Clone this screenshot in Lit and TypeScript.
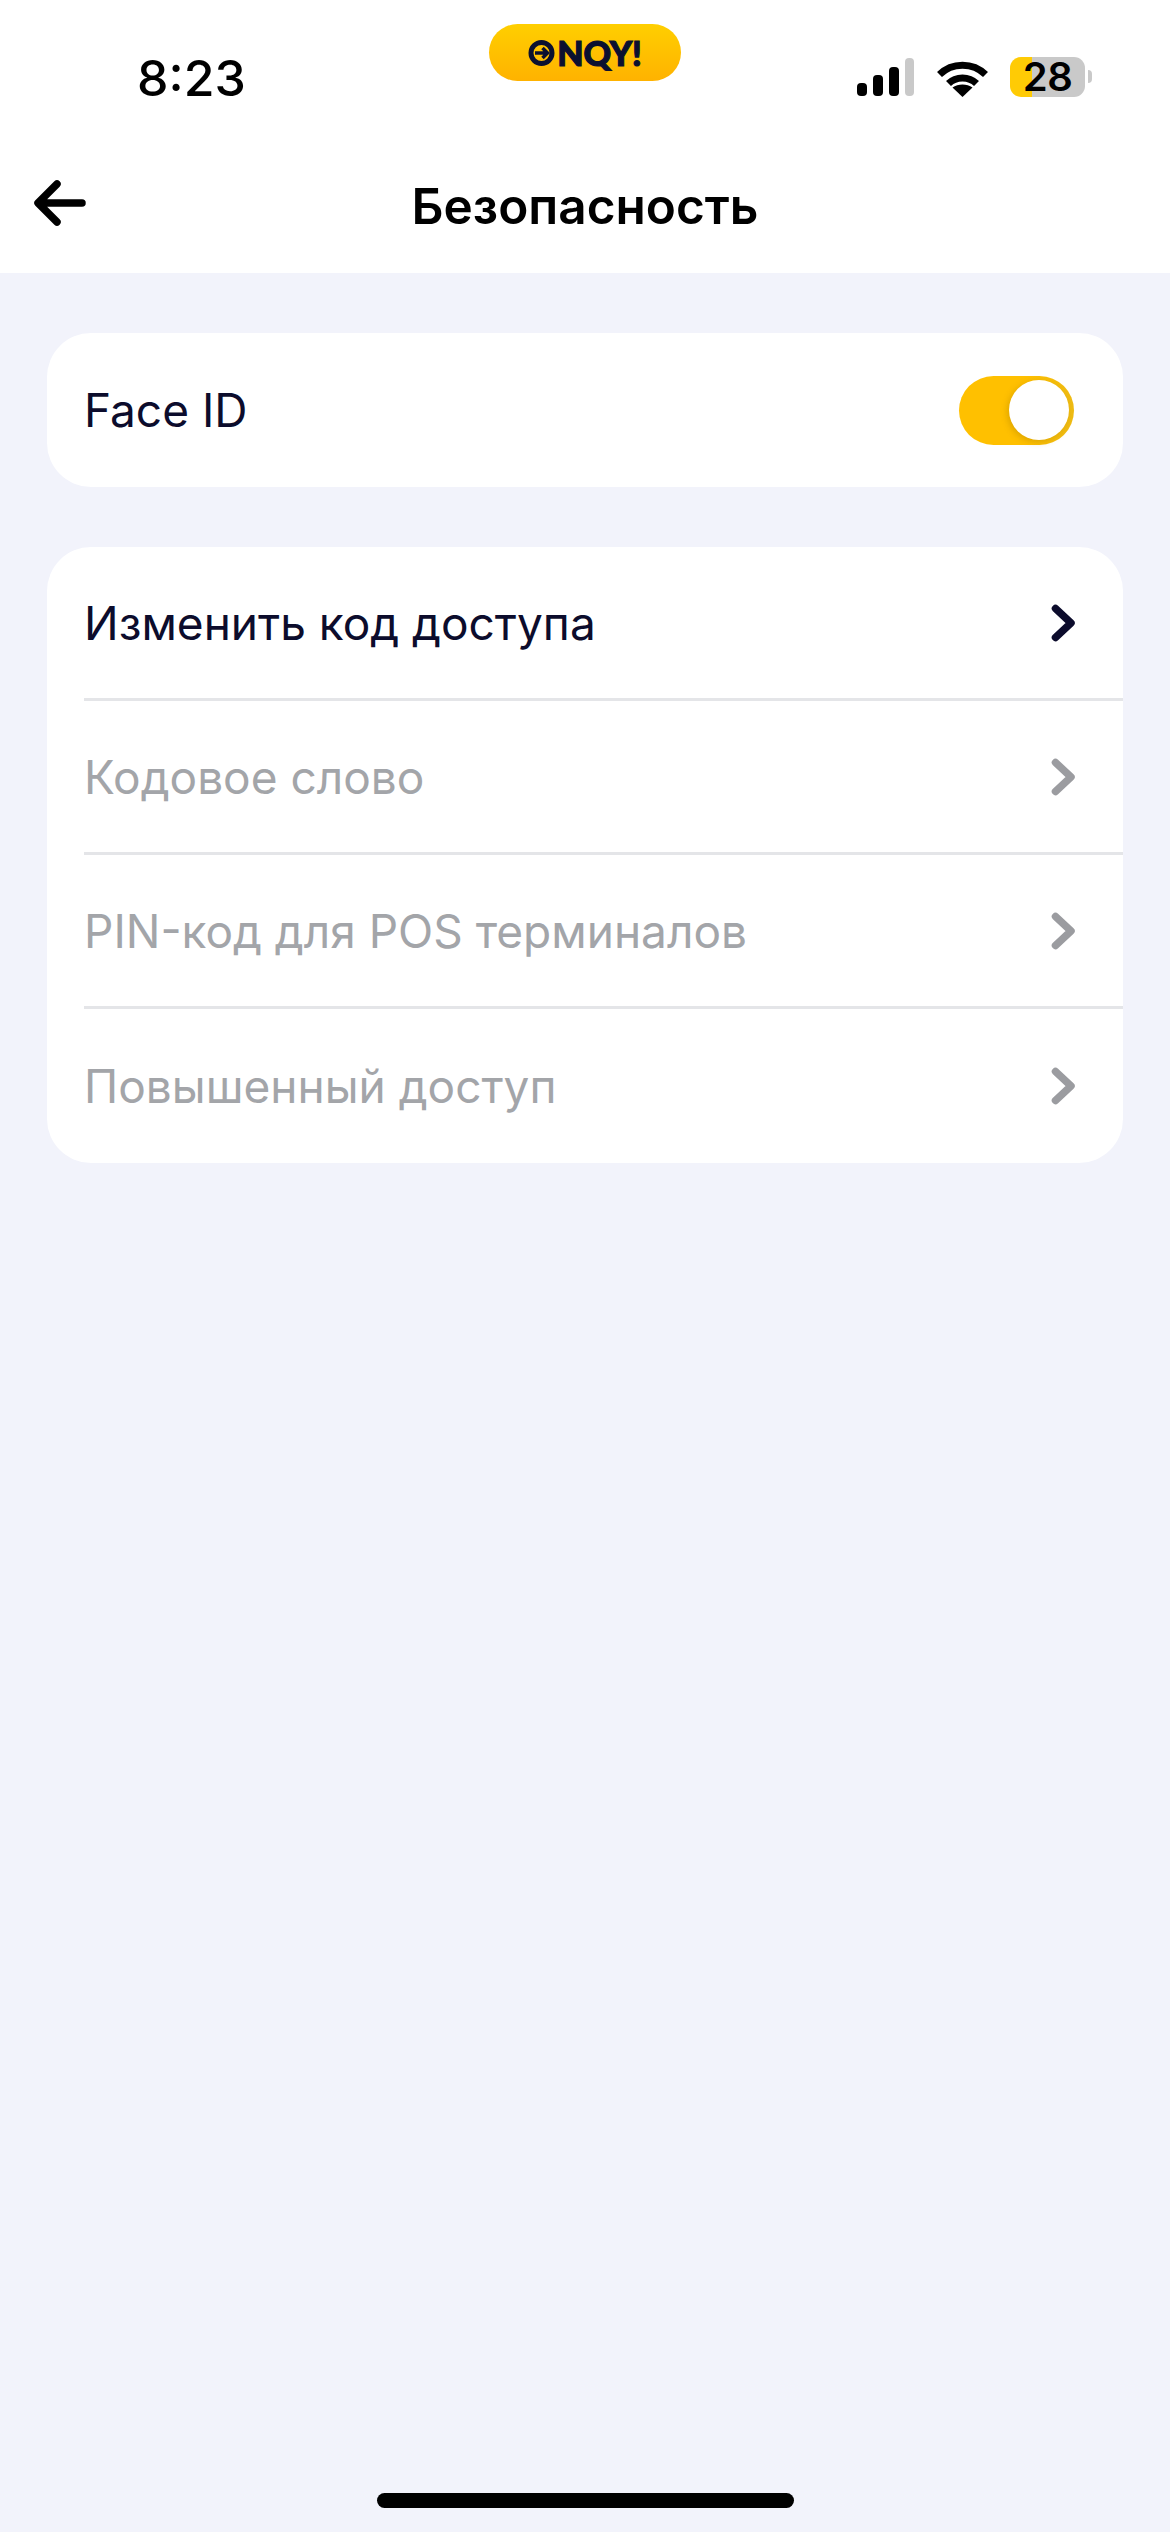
import { LitElement, css, html, svg } from 'lit'
import { customElement } from 'lit/decorators.js'

interface Row {
  label: string
  disabled: boolean
}

const ROWS: Row[] = [
  { label: 'Изменить код доступа', disabled: false },
  { label: 'Кодовое слово', disabled: true },
  { label: 'PIN-код для POS терминалов', disabled: true },
  { label: 'Повышенный доступ', disabled: true },
]

const chevron = svg`<polyline points="4.5,4.5 20,19 4.5,33.5" fill="none" stroke="currentColor" stroke-width="7.5" stroke-linecap="round" stroke-linejoin="round" />`

@customElement('app-root')
export class AppRoot extends LitElement {
  static styles = css`
:host {
  display: block;
  width: 1170px;
  height: 2532px;
  background-color: #f2f3fb;
  font-family: Inter, "Noto Sans", sans-serif;
  color: #0c0c2c;
}

.page {
  display: flex;
  flex-direction: column;
  height: 100%;
}

header {
  background-color: #fff;
  height: 273px;
  flex-shrink: 0;
}

.status {
  display: grid;
  grid-template-columns: 1fr 192px 1fr;
  height: 150px;
}

.time {
  padding: 53px 0 0 137px;
  font-size: 50px;
  font-weight: 500;
  line-height: 50px;
  color: #000;
  height: 50px;
}

.logo {
  display: flex;
  align-items: center;
  justify-content: center;
  gap: 2px;
  margin-top: 24px;
  height: 57px;
  border-radius: 29px;
  background: linear-gradient(180deg, #ffcf00, #ffb200);
  font-family: Lato, sans-serif;
  font-size: 34px;
  font-weight: 900;
  line-height: 1;
  color: #0b1030;
  -webkit-text-stroke: 1.2px #0b1030;
}

.indicators {
  display: flex;
  align-items: flex-start;
  justify-content: flex-end;
  padding: 57px 78px 0 0;
}

.signal {
  margin-right: 23px;
}

.wifi {
  margin: 2px 22px 0 0;
}

.battery {
  display: flex;
  align-items: center;
  justify-content: center;
  width: 75px;
  height: 40px;
  border-radius: 11px;
  background: linear-gradient(90deg, #ffcb05 22px, #c9c9c9 22px);
  font-size: 40px;
  font-weight: 600;
  letter-spacing: -0.5px;
  line-height: 40px;
  color: #000;
}

.nub {
  align-self: flex-start;
  width: 4px;
  height: 13px;
  margin: 13px 0 0 3px;
  border-radius: 0 4px 4px 0;
  background-color: #c9c9c9;
}

.nav {
  display: grid;
  grid-template-columns: 1fr auto 1fr;
  align-items: center;
  padding: 0 30px;
  height: 108px;
}

.nav svg {
  display: block;
  margin-top: -3px;
}

.nav h1 {
  margin: 4px 0 0;
  font-size: 49.5px;
  font-weight: 600;
  line-height: 58px;
  color: #000;
}

main {
  display: flex;
  flex-direction: column;
  gap: 60px;
  padding: 60px 47px 0;
}

.card {
  background-color: #fff;
  border-radius: 44px;
  overflow: hidden;
}

.row {
  display: flex;
  align-items: center;
  justify-content: space-between;
  box-sizing: border-box;
  height: 154px;
  margin-left: 37px;
  border-bottom: 3px solid #e4e5e8;
  font-size: 46px;
  line-height: 56px;
}

.row:last-child {
  border-bottom: none;
}

.row.disabled {
  color: #a3a5a9;
}

.row svg {
  display: block;
  margin-right: 47px;
}

.row.disabled svg {
  color: #9b9ca0;
}

.toggle {
  display: flex;
  align-items: center;
  justify-content: flex-end;
  box-sizing: border-box;
  width: 115px;
  height: 69px;
  margin-right: 49px;
  padding-right: 5px;
  border-radius: 35px;
  background: linear-gradient(90deg, #ffc000 60%, #eebb14);
}

.thumb {
  width: 60px;
  height: 60px;
  border-radius: 50%;
  background-color: #fff;
  box-shadow: -2px 2px 6px rgba(150, 110, 0, 0.3);
}

.home {
  width: 417px;
  height: 15px;
  margin: auto auto 24px;
  border-radius: 8px;
  background-color: #000;
}
`

  render () {
    return html`
<div class="page">
  <header>
    <div class="status">
      <div class="time">8:23</div>
      <div class="logo">
        <svg width="27" height="26" viewBox="0 0 27 26">
          <circle cx="13.500" cy="13" r="10.500" fill="none" stroke="#0b1030" stroke-width="5" />
          <path d="M7 13h13M14.500 8l5 5-5 5" fill="none" stroke="#0b1030" stroke-width="3.500" />
        </svg>
        <span>NQY!</span>
      </div>
      <div class="indicators">
        <svg class="signal" width="57" height="39" viewBox="0 0 57 39">
          <rect x="0" y="26" width="10" height="13" rx="4" fill="#000" />
          <rect x="16" y="18" width="10" height="21" rx="4" fill="#000" />
          <rect x="32" y="10" width="10" height="29" rx="4" fill="#000" />
          <rect x="48" y="1" width="9" height="38" rx="4" fill="#c9c9c9" />
        </svg>
        <svg class="wifi" width="51" height="38" viewBox="0 0 51 38">
          <path d="M2.500 15.500C15 3 36 3 48.500 15.500" fill="none" stroke="#000" stroke-width="7" />
          <path d="M11.500 24.500C19 17 32 17 39.500 24.500" fill="none" stroke="#000" stroke-width="7" />
          <path d="M25.500 38L15.500 28.500C21 24.500 30 24.500 35.500 28.500Z" fill="#000" />
        </svg>
        <div class="battery">28</div>
        <div class="nub"></div>
      </div>
    </div>
    <div class="nav">
      <svg width="56" height="50" viewBox="0 0 56 50">
        <path d="M52 25H9M27 6L8 25l19 19" fill="none" stroke="#000" stroke-width="7.500" stroke-linecap="round" stroke-linejoin="round" />
      </svg>
      <h1>Безопасность</h1>
    </div>
  </header>
  <main>
    <section class="card">
      <div class="row">
        <span>Face ID</span>
        <div class="toggle"><div class="thumb"></div></div>
      </div>
    </section>
    <section class="card">
      ${ROWS.map(row => html`
      <div class="row ${row.disabled ? 'disabled' : ''}">
        <span>${row.label}</span>
        <svg width="25" height="38" viewBox="0 0 25 38">${chevron}</svg>
      </div>`)}
    </section>
  </main>
  <div class="home"></div>
</div>
`
  }
}
